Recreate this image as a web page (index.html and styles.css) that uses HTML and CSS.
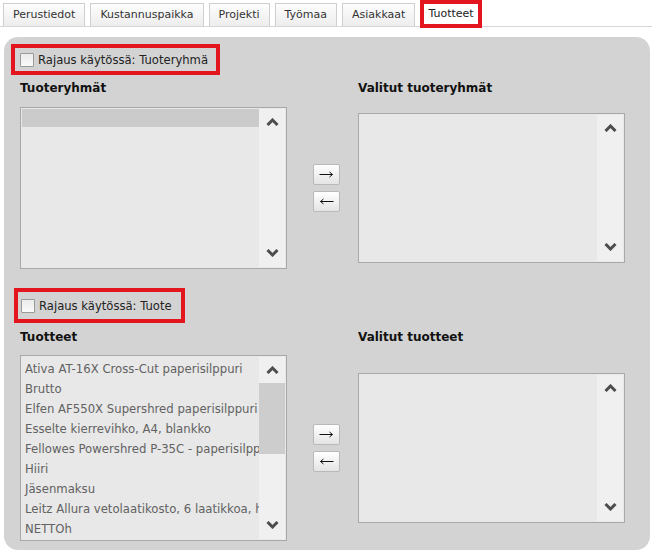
FILE: index.html
```html
<!DOCTYPE html>
<html lang="fi">
<head>
<meta charset="utf-8">
<title>Tuotteet</title>
<link rel="stylesheet" href="styles.css">
</head>
<body>
<div class="tabs">
  <div class="tab">Perustiedot</div>
  <div class="tab">Kustannuspaikka</div>
  <div class="tab">Projekti</div>
  <div class="tab">Työmaa</div>
  <div class="tab">Asiakkaat</div>
  <div class="tab active">Tuotteet</div>
</div>

<div class="panel">
  <label class="rajaus rajaus-1"><span class="cb"></span><span class="rajaus-text">Rajaus käytössä: Tuoteryhmä</span></label>

  <div class="picker picker-1">
    <div class="ph ph-left">Tuoteryhmät</div>
    <div class="ph ph-right">Valitut tuoteryhmät</div>

    <div class="list list-left list-groups">
      <div class="items">
        <div class="row row-sel"></div>
      </div>
      <div class="sb">
        <div class="sb-up"><svg width="13" height="8" viewBox="0 0 13 8"><path d="M1.5 7 L6.5 2 L11.5 7" fill="none" stroke="#4d4d4d" stroke-width="3"/></svg></div>
        <div class="sb-track"></div>
        <div class="sb-down"><svg width="13" height="8" viewBox="0 0 13 8"><path d="M1.5 1 L6.5 6 L11.5 1" fill="none" stroke="#4d4d4d" stroke-width="3"/></svg></div>
      </div>
    </div>

    <div class="movers">
      <button class="mv" type="button"><svg width="15" height="7" viewBox="0 0 15 7"><path d="M0.5 3.5 H13.5 M10.5 1 L13.5 3.5 L10.5 6" fill="none" stroke="#111" stroke-width="1"/></svg></button>
      <button class="mv" type="button"><svg width="15" height="7" viewBox="0 0 15 7"><path d="M14.5 3.5 H1.5 M4.5 1 L1.5 3.5 L4.5 6" fill="none" stroke="#111" stroke-width="1"/></svg></button>
    </div>

    <div class="list list-right list-selected">
      <div class="items"></div>
      <div class="sb">
        <div class="sb-up"><svg width="13" height="8" viewBox="0 0 13 8"><path d="M1.5 7 L6.5 2 L11.5 7" fill="none" stroke="#4d4d4d" stroke-width="3"/></svg></div>
        <div class="sb-track"></div>
        <div class="sb-down"><svg width="13" height="8" viewBox="0 0 13 8"><path d="M1.5 1 L6.5 6 L11.5 1" fill="none" stroke="#4d4d4d" stroke-width="3"/></svg></div>
      </div>
    </div>
  </div>

  <label class="rajaus rajaus-2"><span class="cb"></span><span class="rajaus-text">Rajaus käytössä: Tuote</span></label>

  <div class="picker picker-2">
    <div class="ph ph-left">Tuotteet</div>
    <div class="ph ph-right">Valitut tuotteet</div>

    <div class="list list-left list-products">
      <div class="items">
        <div class="row">Ativa AT-16X Cross-Cut paperisilppuri</div>
        <div class="row">Brutto</div>
        <div class="row">Elfen AF550X Supershred paperisilppuri</div>
        <div class="row">Esselte kierrevihko, A4, blankko</div>
        <div class="row">Fellowes Powershred P-35C - paperisilppuri</div>
        <div class="row">Hiiri</div>
        <div class="row">Jäsenmaksu</div>
        <div class="row">Leitz Allura vetolaatikosto, 6 laatikkoa, harmaa</div>
        <div class="row">NETTOh</div>
      </div>
      <div class="sb">
        <div class="sb-up"><svg width="13" height="8" viewBox="0 0 13 8"><path d="M1.5 7 L6.5 2 L11.5 7" fill="none" stroke="#4d4d4d" stroke-width="3"/></svg></div>
        <div class="sb-track"><div class="thumb"></div></div>
        <div class="sb-down"><svg width="13" height="8" viewBox="0 0 13 8"><path d="M1.5 1 L6.5 6 L11.5 1" fill="none" stroke="#4d4d4d" stroke-width="3"/></svg></div>
      </div>
    </div>

    <div class="movers">
      <button class="mv" type="button"><svg width="15" height="7" viewBox="0 0 15 7"><path d="M0.5 3.5 H13.5 M10.5 1 L13.5 3.5 L10.5 6" fill="none" stroke="#111" stroke-width="1"/></svg></button>
      <button class="mv" type="button"><svg width="15" height="7" viewBox="0 0 15 7"><path d="M14.5 3.5 H1.5 M4.5 1 L1.5 3.5 L4.5 6" fill="none" stroke="#111" stroke-width="1"/></svg></button>
    </div>

    <div class="list list-right list-selected">
      <div class="items"></div>
      <div class="sb">
        <div class="sb-up"><svg width="13" height="8" viewBox="0 0 13 8"><path d="M1.5 7 L6.5 2 L11.5 7" fill="none" stroke="#4d4d4d" stroke-width="3"/></svg></div>
        <div class="sb-track"></div>
        <div class="sb-down"><svg width="13" height="8" viewBox="0 0 13 8"><path d="M1.5 1 L6.5 6 L11.5 1" fill="none" stroke="#4d4d4d" stroke-width="3"/></svg></div>
      </div>
    </div>
  </div>
</div>
</body>
</html>
```
FILE: styles.css
```css
html, body {
  margin: 0;
  padding: 0;
  background: #ffffff;
}
body {
  font-family: "DejaVu Sans", Verdana, sans-serif;
  color: #222;
  width: 652px;
  overflow: hidden;
}

/* Tabs */
.tabs {
  display: flex;
  align-items: flex-start;
  gap: 5px;
  height: 23px;
  padding: 3px 0 0 3px;
  border-bottom: 1px solid #d6d6d6;
}
.tab {
  box-sizing: border-box;
  height: 23px;
  padding: 0 9px;
  border: 1px solid #cfcfcf;
  border-bottom: none;
  background: linear-gradient(#fdfdfd, #ededed);
  font-size: 11px;
  line-height: 22px;
  color: #333;
  white-space: nowrap;
}
.tab.active {
  height: 28px;
  margin-top: -3px;
  padding: 0 4px;
  border: 4px solid #e3161f;
  background: #ffffff;
  line-height: 20px;
  color: #222;
}

/* Panel */
.panel {
  box-sizing: border-box;
  width: 646px;
  margin: 10px 0 0 4px;
  padding: 7px 0 9px 7px;
  background: #d3d3d3;
  border-radius: 14px;
}

/* Annotated checkbox rows */
.rajaus {
  box-sizing: border-box;
  display: flex;
  align-items: center;
  gap: 4px;
  border: 4px solid #e3161f;
  font-size: 11.6px;
  color: #222;
}
.rajaus-1 {
  width: 209px;
  height: 31px;
  padding-left: 5px;
}
.rajaus-2 {
  width: 171px;
  height: 35px;
  margin: 19px 0 0 3px;
  padding-left: 3px;
}
.cb {
  box-sizing: border-box;
  width: 14px;
  height: 14px;
  border: 1px solid #9a9a9a;
  border-radius: 1px;
  background: linear-gradient(#ececec, #fafafa);
  flex: none;
}
.rajaus-text {
  white-space: nowrap;
}

/* Picker grid */
.picker {
  display: grid;
  grid-template-columns: 267px 26px 27px 18px 267px;
  align-items: center;
  margin-left: 9px;
}
.picker-1 {
  margin-top: 5px;
  row-gap: 11px;
}
.picker-2 {
  margin-top: 6px;
  row-gap: 10px;
}
.ph {
  font-weight: bold;
  font-size: 12px;
  line-height: 16px;
  color: #111;
  white-space: nowrap;
  align-self: start;
}
.ph-left { grid-column: 1; grid-row: 1; }
.ph-right { grid-column: 5; grid-row: 1; }
.list-left { grid-column: 1; grid-row: 2; }
.movers { grid-column: 3; grid-row: 2; }
.list-right { grid-column: 5; grid-row: 2; }

/* Lists */
.list {
  box-sizing: border-box;
  display: flex;
  border: 1px solid #a8a8a8;
  padding: 1px;
  background: #e8e8e8;
}
.list-groups { height: 162px; }
.list-selected { height: 150px; }
.list-products { height: 186px; }

.items {
  flex: 1;
  min-width: 0;
  overflow: hidden;
}
.list-products .items {
  padding-top: 2px;
}
.row {
  height: 18px;
  white-space: nowrap;
  overflow: hidden;
}
.row-sel {
  background: #cbcbcb;
}
.list-products .row {
  height: 20px;
  line-height: 20px;
  padding-left: 3px;
  font-size: 11.7px;
  color: #626262;
}

/* Scrollbar look */
.sb {
  width: 26px;
  flex: none;
  display: flex;
  flex-direction: column;
  background: #f0f0f0;
}
.sb-up, .sb-down {
  display: flex;
  align-items: center;
  justify-content: center;
  flex: none;
}
.sb-up { height: 25px; }
.sb-down { height: 29px; }
.sb-track {
  flex: 1;
}
.thumb {
  margin-top: 1px;
  height: 71px;
  background: #cdcdcd;
}

/* Move buttons */
.movers {
  display: flex;
  flex-direction: column;
  gap: 6px;
}
.mv {
  box-sizing: border-box;
  width: 27px;
  height: 21px;
  margin: 0;
  padding: 0;
  display: flex;
  align-items: center;
  justify-content: center;
  border: 1px solid #b9b9b9;
  border-radius: 2px;
  background: linear-gradient(#ffffff, #e4e4e4);
}
.mv svg {
  display: block;
}
```
